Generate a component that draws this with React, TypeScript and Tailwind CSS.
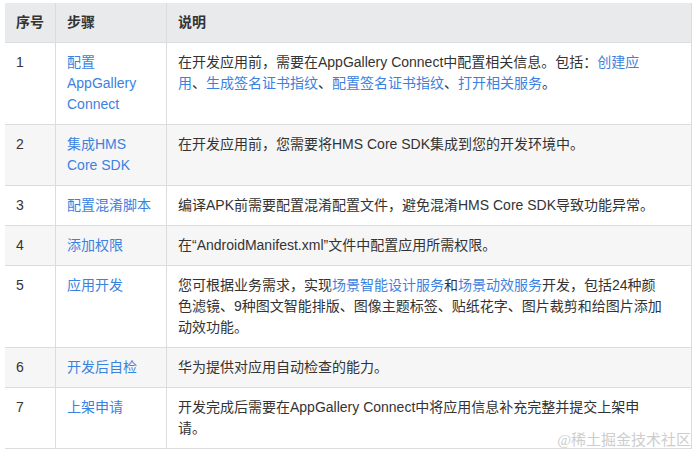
import React from 'react';

type Row = {
  no: string;
  step: React.ReactNode;
  desc: React.ReactNode;
};

const A = ({ children }: { children: React.ReactNode }) => (
  <span className="text-[#3b82e0]">{children}</span>
);

const rows: Row[] = [
  {
    no: '1',
    step: (
      <>
        配置
        <br />
        AppGallery
        <br />
        Connect
      </>
    ),
    desc: (
      <>
        在开发应用前，需要在AppGallery Connect中配置相关信息。包括：<A>创建应用</A>、<A>生成签名证书指纹</A>、
        <A>配置签名证书指纹</A>、<A>打开相关服务</A>。
      </>
    ),
  },
  {
    no: '2',
    step: (
      <>
        集成HMS
        <br />
        Core SDK
      </>
    ),
    desc: '在开发应用前，您需要将HMS Core SDK集成到您的开发环境中。',
  },
  { no: '3', step: '配置混淆脚本', desc: '编译APK前需要配置混淆配置文件，避免混淆HMS Core SDK导致功能异常。' },
  { no: '4', step: '添加权限', desc: '在“AndroidManifest.xml”文件中配置应用所需权限。' },
  {
    no: '5',
    step: '应用开发',
    desc: (
      <>
        您可根据业务需求，实现<A>场景智能设计服务</A>和<A>场景动效服务</A>
        开发，包括24种颜色滤镜、9种图文智能排版、图像主题标签、贴纸花字、图片裁剪和给图片添加动效功能。
      </>
    ),
  },
  { no: '6', step: '开发后自检', desc: '华为提供对应用自动检查的能力。' },
  { no: '7', step: '上架申请', desc: '开发完成后需要在AppGallery Connect中将应用信息补充完整并提交上架申请。' },
];

export default function App() {
  return (
    <div
      className="relative w-[697px] h-[455px] bg-white text-[14px] leading-[21px] text-[#333]"
      style={{ fontFamily: '"Liberation Sans", Arial, "Noto Sans CJK SC", sans-serif' }}
    >
      <div className="ml-[5px] pt-[3px] w-[687px]">
        <div className="grid grid-cols-[50px_111px_526px] bg-[#e9eaec] font-bold border-b border-[#dcdcdc]">
          <div className="pl-[11px] py-[9px]">序号</div>
          <div className="pl-[11px] py-[9px] border-l border-[#dcdcdc]">步骤</div>
          <div className="pl-[11px] py-[9px] border-l border-r border-[#dcdcdc]">说明</div>
        </div>
        {rows.map((r, i) => (
          <div
            key={r.no}
            className={`grid grid-cols-[50px_111px_526px] border-b border-[#dcdcdc] ${
              i % 2 === 1 ? 'bg-[#f6f6f6]' : 'bg-white'
            }`}
          >
            <div className="pl-[11px] py-[9px]">{r.no}</div>
            <div className="pl-[11px] pr-[8px] py-[9px] border-l border-[#dcdcdc] text-[#3b82e0]">{r.step}</div>
            <div className="pl-[11px] pr-[29px] py-[9px] border-l border-r border-[#dcdcdc]">{r.desc}</div>
          </div>
        ))}
      </div>
      <div
        className="absolute right-[6px] top-[430px] text-[15px] leading-[20px] text-[#cdcdcd]"
        style={{ fontFamily: '"Liberation Serif", "Noto Sans CJK SC", serif' }}
      >
        @稀土掘金技术社区
      </div>
    </div>
  );
}
